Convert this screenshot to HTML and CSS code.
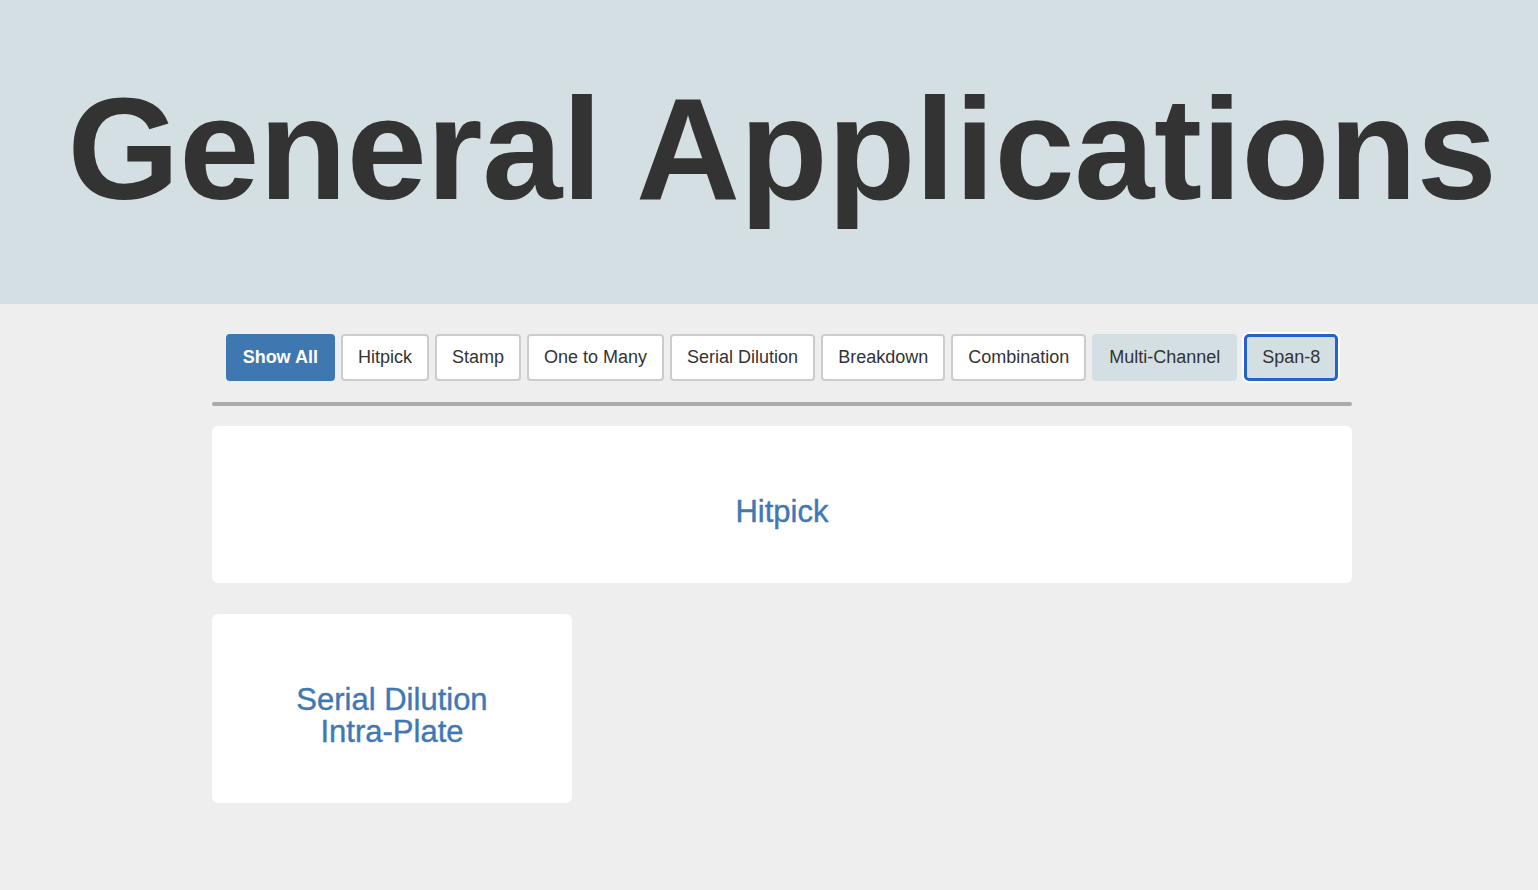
FILE: index.html
```html
<!DOCTYPE html>
<html lang="en">
<head>
<meta charset="utf-8">
<title>General Applications</title>
<link rel="stylesheet" href="styles.css">
</head>
<body>
<header class="hero">
  <h1 class="hero-title">General Applications</h1>
</header>
<main class="content">
  <nav class="filters">
    <button class="filter filter-active">Show All</button>
    <button class="filter">Hitpick</button>
    <button class="filter">Stamp</button>
    <button class="filter">One to Many</button>
    <button class="filter">Serial Dilution</button>
    <button class="filter">Breakdown</button>
    <button class="filter">Combination</button>
    <button class="filter filter-muted">Multi-Channel</button>
    <button class="filter filter-muted filter-focus">Span-8</button>
  </nav>
  <hr class="divider">
  <section class="cards">
    <a class="card card-wide" href="#">Hitpick</a>
    <a class="card card-small" href="#">Serial Dilution<br>Intra-Plate</a>
  </section>
</main>
</body>
</html>
```

FILE: styles.css
```css
* { box-sizing: border-box; }
html, body {
  margin: 0;
  padding: 0;
}
body {
  background: #eeeeee;
  font-family: "Liberation Sans", Arial, Helvetica, sans-serif;
  color: #333333;
  min-height: 890px;
}
.hero {
  background: #d4dfe4;
  height: 304px;
  display: flex;
  align-items: center;
  justify-content: center;
  padding-left: 26px;
  padding-bottom: 4px;
}
.hero-title {
  margin: 0;
  font-size: 144px;
  font-weight: bold;
  letter-spacing: -0.3px;
  color: #333333;
  line-height: 1;
  white-space: nowrap;
}
.content {
  width: 1140px;
  margin: 0 186px 0 212px;
  padding-top: 30px;
}
.filters {
  display: flex;
  justify-content: center;
  gap: 6px;
}
.filter {
  font-family: "Liberation Sans", Arial, Helvetica, sans-serif;
  font-size: 18px;
  color: #333333;
  background: #ffffff;
  border: 2px solid #cccccc;
  border-radius: 4px;
  height: 47px;
  padding: 0 15px;
  cursor: pointer;
}
.filter-active {
  background: #3f77b0;
  border-color: #3f77b0;
  color: #ffffff;
  font-weight: bold;
}
.filter-muted {
  background: #d4dfe4;
  border-color: #d4dfe4;
}
.filter-focus {
  border: 3px solid #2763c6;
  border-radius: 5px;
  box-shadow: 0 0 0 2px #ffffff;
  margin-left: 1px;
}
.divider {
  border: none;
  height: 4px;
  background: #aaaaaa;
  border-radius: 2px;
  margin: 21px 0 20px;
}
.cards {
  display: flex;
  flex-wrap: wrap;
  gap: 31px 30px;
}
.card {
  background: #ffffff;
  border-radius: 6px;
  display: flex;
  align-items: center;
  justify-content: center;
  text-align: center;
  color: #3f78b4;
  text-decoration: none;
  font-size: 31px;
  line-height: 32px;
  -webkit-text-stroke: 0.4px #3f78b4;
  padding-top: 15px;
}
.card-wide {
  width: 100%;
  height: 157px;
}
.card-small {
  width: 360px;
  height: 189px;
}
```
